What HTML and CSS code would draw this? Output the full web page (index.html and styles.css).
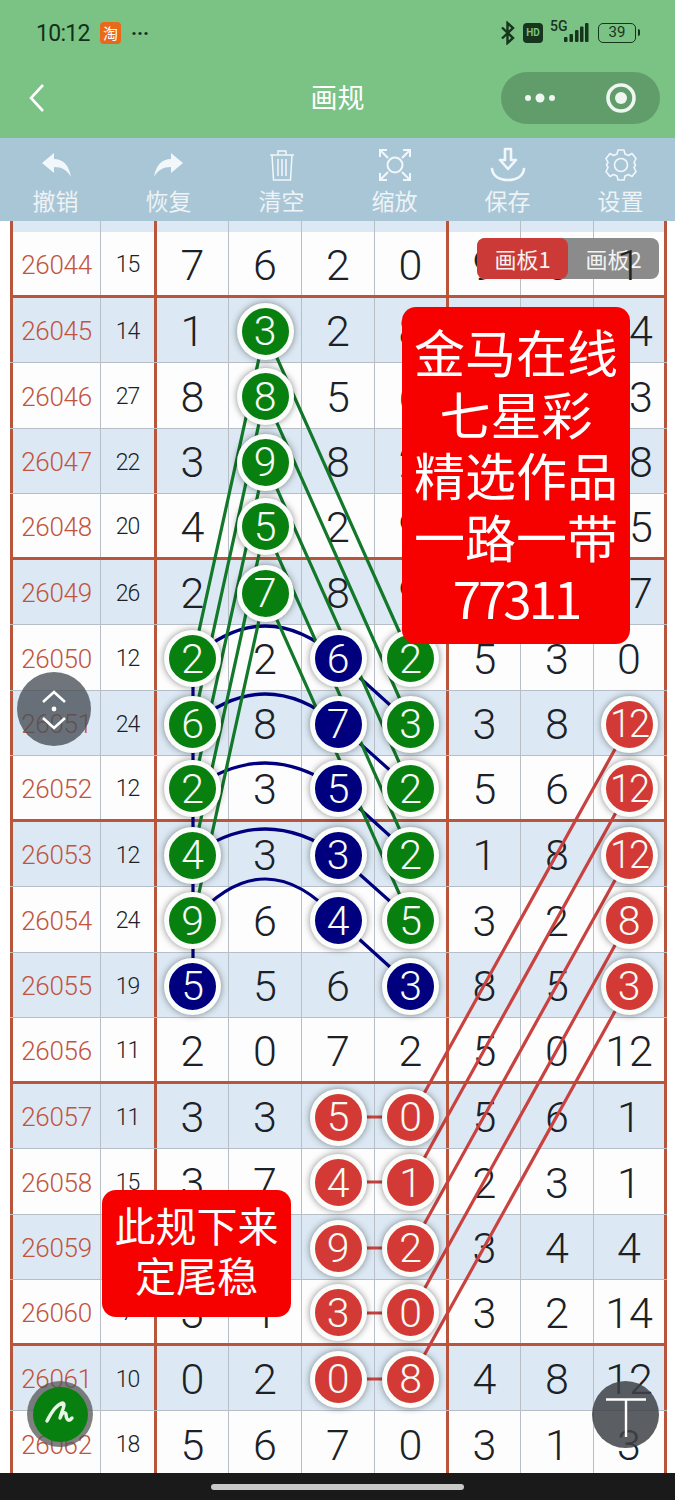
FILE: index.html
```html
<!DOCTYPE html>
<html lang="zh">
<head>
<meta charset="utf-8">
<title>画规</title>
<link rel="stylesheet" href="styles.css">
</head>
<body>
<div class="app">
  <header class="head">
    <div class="status">
      <div class="status-left">
        <span class="time">10:12</span>
        <span class="tb">淘</span>
        <span class="more">···</span>
      </div>
      <div class="status-right">
        <svg class="bt" width="15" height="24" viewBox="0 0 15 24"><path d="M2 6.500 13 17l-5.500 5V2L13 7 2 17.500" fill="none" stroke="#17341d" stroke-width="2.400"/></svg>
        <span class="hd">HD</span>
        <span class="net">5G</span>
        <svg class="sig" width="25" height="20" viewBox="0 0 25 20"><g fill="#17341d"><rect x="0" y="14" width="3.500" height="5" rx="1"/><rect x="5.500" y="11" width="3.500" height="8" rx="1"/><rect x="11" y="7" width="3.500" height="12" rx="1"/><rect x="16" y="3.500" width="3.500" height="15.500" rx="1"/><rect x="21" y="0" width="3.500" height="19" rx="1"/></g></svg>
        <span class="batt"><span class="batt-num">39</span></span>
      </div>
    </div>
    <nav class="nav">
      <svg class="back" width="18" height="30" viewBox="0 0 18 30"><path d="M15 2 3 15l12 13" fill="none" stroke="#fff" stroke-width="2.600"/></svg>
      <h1 class="title">画规</h1>
      <div class="capsule">
        <svg width="34" height="12" viewBox="0 0 34 12"><g fill="#eef6ef"><circle cx="5" cy="6" r="3"/><circle cx="17" cy="6" r="4.500"/><circle cx="29" cy="6" r="3"/></g></svg>
        <svg width="32" height="32" viewBox="0 0 32 32"><circle cx="16" cy="16" r="13" fill="none" stroke="#eef6ef" stroke-width="3.600"/><circle cx="16" cy="16" r="6" fill="#eef6ef"/></svg>
      </div>
    </nav>
  </header>

  <div class="toolbar">
    <div class="tool">
      <svg width="34" height="34" viewBox="0 0 34 34"><path d="M3 15 15 5v6c9 0 15 6 17 18-4-7-9-10-17-10v6z" fill="#f1f7fa"/></svg>
      <span>撤销</span>
    </div>
    <div class="tool">
      <svg width="34" height="34" viewBox="0 0 34 34"><path d="M31 15 19 5v6c-9 0-15 6-17 18 4-7 9-10 17-10v6z" fill="#f1f7fa"/></svg>
      <span>恢复</span>
    </div>
    <div class="tool">
      <svg width="34" height="34" viewBox="0 0 34 34"><g fill="none" stroke="#f1f7fa" stroke-width="1.500"><path d="M5 7h24M13 7V3h8v4M7 7l1.500 25h17L27 7M13 11v17M17 11v17M21 11v17"/></g></svg>
      <span>清空</span>
    </div>
    <div class="tool">
      <svg width="34" height="34" viewBox="0 0 34 34"><g fill="none" stroke="#f1f7fa" stroke-width="2"><circle cx="17" cy="17" r="7.500"/><path d="M2 9V2h7M2 2l8 8M32 9V2h-7M32 2l-8 8M2 25v7h7M2 32l8-8M32 25v7h-7M32 32l-8-8"/></g></svg>
      <span>缩放</span>
    </div>
    <div class="tool">
      <svg width="36" height="36" viewBox="0 0 36 36"><g fill="none" stroke="#f1f7fa" stroke-width="2.600" stroke-linejoin="round" stroke-linecap="round"><path d="M15 2h6v11h5l-8 9-8-9h5z"/><path d="M2 22c1 7 7 11 16 11s15-4 16-11"/></g></svg>
      <span>保存</span>
    </div>
    <div class="tool">
      <svg width="34" height="34" viewBox="0 0 34 34"><g fill="none" stroke="#f1f7fa" stroke-width="1.600" stroke-linejoin="round"><circle cx="17" cy="17" r="6.500"/><path d="M14 2h6l1 4 3.500 1.500 3.500-2 4 5-2 4 1.500 2.500-1.500 2.500 2 4-4 5-3.500-2L21 28l-1 4h-6l-1-4-3.500-1.500-3.500 2-4-5 2-4L2.500 17 4 14.500l-2-4 4-5 3.500 2L13 6z"/></g></svg>
      <span>设置</span>
    </div>
  </div>

  <main class="board">
    <div class="row alt sliver"><i class="c lab"></i><i class="c sum"></i><i class="c"></i><i class="c"></i><i class="c"></i><i class="c bar"></i><i class="c"></i><i class="c"></i><i class="c end"></i></div>

    <div class="row sep"><span class="c lab">26044</span><span class="c sum">15</span><span class="c">7</span><span class="c">6</span><span class="c">2</span><span class="c bar">0</span><span class="c">9</span><span class="c">5</span><span class="c end"><b class="over">1</b></span></div>
    <div class="row alt"><span class="c lab">26045</span><span class="c sum">14</span><span class="c">1</span><span class="c"><b class="ball g">3</b></span><span class="c">2</span><span class="c bar">8</span><span class="c">2</span><span class="c">6</span><span class="c end">14</span></div>
    <div class="row"><span class="c lab">26046</span><span class="c sum">27</span><span class="c">8</span><span class="c"><b class="ball g">8</b></span><span class="c">5</span><span class="c bar">6</span><span class="c">1</span><span class="c">3</span><span class="c end">13</span></div>
    <div class="row alt"><span class="c lab">26047</span><span class="c sum">22</span><span class="c">3</span><span class="c"><b class="ball g">9</b></span><span class="c">8</span><span class="c bar">2</span><span class="c">4</span><span class="c">7</span><span class="c end">18</span></div>
    <div class="row sep"><span class="c lab">26048</span><span class="c sum">20</span><span class="c">4</span><span class="c"><b class="ball g">5</b></span><span class="c">2</span><span class="c bar">9</span><span class="c">0</span><span class="c">2</span><span class="c end">15</span></div>
    <div class="row alt"><span class="c lab">26049</span><span class="c sum">26</span><span class="c">2</span><span class="c"><b class="ball g">7</b></span><span class="c">8</span><span class="c bar">9</span><span class="c">6</span><span class="c">1</span><span class="c end">17</span></div>
    <div class="row"><span class="c lab">26050</span><span class="c sum">12</span><span class="c"><b class="ball g">2</b></span><span class="c">2</span><span class="c"><b class="ball n">6</b></span><span class="c bar"><b class="ball g">2</b></span><span class="c">5</span><span class="c">3</span><span class="c end">0</span></div>
    <div class="row alt"><span class="c lab">26051</span><span class="c sum">24</span><span class="c"><b class="ball g">6</b></span><span class="c">8</span><span class="c"><b class="ball n">7</b></span><span class="c bar"><b class="ball g">3</b></span><span class="c">3</span><span class="c">8</span><span class="c end"><b class="ball r two">12</b></span></div>
    <div class="row sep"><span class="c lab">26052</span><span class="c sum">12</span><span class="c"><b class="ball g">2</b></span><span class="c">3</span><span class="c"><b class="ball n">5</b></span><span class="c bar"><b class="ball g">2</b></span><span class="c">5</span><span class="c">6</span><span class="c end"><b class="ball r two">12</b></span></div>
    <div class="row alt"><span class="c lab">26053</span><span class="c sum">12</span><span class="c"><b class="ball g">4</b></span><span class="c">3</span><span class="c"><b class="ball n">3</b></span><span class="c bar"><b class="ball g">2</b></span><span class="c">1</span><span class="c">8</span><span class="c end"><b class="ball r two">12</b></span></div>
    <div class="row"><span class="c lab">26054</span><span class="c sum">24</span><span class="c"><b class="ball g">9</b></span><span class="c">6</span><span class="c"><b class="ball n">4</b></span><span class="c bar"><b class="ball g">5</b></span><span class="c">3</span><span class="c">2</span><span class="c end"><b class="ball r">8</b></span></div>
    <div class="row alt"><span class="c lab">26055</span><span class="c sum">19</span><span class="c"><b class="ball n">5</b></span><span class="c">5</span><span class="c">6</span><span class="c bar"><b class="ball n">3</b></span><span class="c">8</span><span class="c">5</span><span class="c end"><b class="ball r">3</b></span></div>
    <div class="row sep"><span class="c lab">26056</span><span class="c sum">11</span><span class="c">2</span><span class="c">0</span><span class="c">7</span><span class="c bar">2</span><span class="c">5</span><span class="c">0</span><span class="c end">12</span></div>
    <div class="row alt"><span class="c lab">26057</span><span class="c sum">11</span><span class="c">3</span><span class="c">3</span><span class="c"><b class="ball r">5</b></span><span class="c bar"><b class="ball r">0</b></span><span class="c">5</span><span class="c">6</span><span class="c end">1</span></div>
    <div class="row"><span class="c lab">26058</span><span class="c sum">15</span><span class="c">3</span><span class="c">7</span><span class="c"><b class="ball r">4</b></span><span class="c bar"><b class="ball r">1</b></span><span class="c">2</span><span class="c">3</span><span class="c end">1</span></div>
    <div class="row alt"><span class="c lab">26059</span><span class="c sum">20</span><span class="c">8</span><span class="c">5</span><span class="c"><b class="ball r">9</b></span><span class="c bar"><b class="ball r">2</b></span><span class="c">3</span><span class="c">4</span><span class="c end">4</span></div>
    <div class="row sep"><span class="c lab">26060</span><span class="c sum">7</span><span class="c">3</span><span class="c">1</span><span class="c"><b class="ball r">3</b></span><span class="c bar"><b class="ball r">0</b></span><span class="c">3</span><span class="c">2</span><span class="c end">14</span></div>
    <div class="row alt"><span class="c lab">26061</span><span class="c sum">10</span><span class="c">0</span><span class="c">2</span><span class="c"><b class="ball r">0</b></span><span class="c bar"><b class="ball r">8</b></span><span class="c">4</span><span class="c">8</span><span class="c end">12</span></div>
    <div class="row"><span class="c lab">26062</span><span class="c sum">18</span><span class="c">5</span><span class="c">6</span><span class="c">7</span><span class="c bar">0</span><span class="c">3</span><span class="c">1</span><span class="c end">3</span></div>

    <svg class="lines" width="675" height="1252" viewBox="0 221 675 1252">
      <g class="navy">
        <path d="M193 658V986"/>
        <path d="M193 658Q265 594 338 658L411 724"/>
        <path d="M193 724Q265 664 338 724L411 789"/>
        <path d="M193 789Q265 737 338 789L411 855"/>
        <path d="M193 855Q265 803 338 855L411 920"/>
        <path d="M193 920Q265 838 338 920L411 986"/>
      </g>
      <g class="green">
        <path d="M193 658 265 331 411 658"/>
        <path d="M193 724 265 396 411 724"/>
        <path d="M193 789 265 462 411 789"/>
        <path d="M193 855 265 527 411 855"/>
        <path d="M193 920 265 593 411 920"/>
      </g>
      <g class="redl">
        <path d="M338 1117H411L629 724"/>
        <path d="M338 1182H411L629 789"/>
        <path d="M338 1248H411L629 855"/>
        <path d="M338 1313H411L629 920"/>
        <path d="M338 1379H411L629 986"/>
      </g>
    </svg>

    <div class="tabs"><span class="tab on">画板1</span><span class="tab">画板2</span></div>

    <div class="note note-a">金马在线<br>七星彩<br>精选作品<br>一路一带<br><span class="num">77311</span></div>
    <div class="note note-b">此规下来<br>定尾稳</div>

    <div class="fab fab-scroll">
      <svg width="40" height="52" viewBox="0 0 40 52"><g fill="none" stroke="#fff" stroke-width="2.600"><path d="M9 19 20 9l11 10M9 35l11 10 11-10"/></g><circle cx="20" cy="26" r="2.400" fill="#fff"/></svg>
    </div>
    <div class="fab fab-pen">
      <span class="pen-in">
        <svg width="40" height="40" viewBox="0 0 40 40"><path d="M7 27C11 19 17 10 23 9c3 1-2 10-3 15 2-5 4-7 6-4 0 3 1 7 4 6l2-2" fill="none" stroke="#e9f5e6" stroke-width="3.400" stroke-linecap="round" stroke-linejoin="round"/></svg>
      </span>
    </div>
    <div class="fab fab-top">
      <svg width="44" height="44" viewBox="0 0 44 44"><path d="M2 6.500h40M22 6.500V44" fill="none" stroke="#fff" stroke-width="2.400"/></svg>
    </div>
  </main>

  <footer class="gesture"><span class="pill"></span></footer>
</div>
</body>
</html>
```
FILE: styles.css
```css
* { box-sizing: border-box; }
html, body { margin: 0; padding: 0; }
body {
  width: 675px;
  height: 1500px;
  overflow: hidden;
  background: #fff;
  font-family: Roboto, "Noto Sans CJK SC", sans-serif;
  color: #1b2127;
}
.app { display: flex; flex-direction: column; height: 1500px; }

/* header */
.head { height: 138px; background: #7bc285; flex: none; }
.status {
  height: 66px;
  padding: 21px 39px 0 36px;
  display: flex;
  justify-content: space-between;
  align-items: flex-start;
}
.status-left { display: flex; align-items: center; height: 24px; }
.time { font-size: 23px; letter-spacing: -.7px; color: #14301b; width: 64px; }
.tb {
  width: 21px; height: 22px; border-radius: 4px;
  background: #e8691a; color: #fff;
  font: 15px/22px "Noto Sans CJK SC", sans-serif;
  text-align: center;
}
.more { margin-left: 10px; font: bold 20px/20px Roboto, sans-serif; color: #14301b; }
.status-right { display: flex; align-items: center; height: 24px; position: relative; }
.bt { margin-right: 8px; margin-left: -8px; }
.hd {
  width: 20px; height: 20px; border-radius: 4px;
  background: #17341d; color: #7bc285;
  font: bold 10px/20px Roboto, sans-serif; text-align: center;
  margin-right: 7px;
}
.net { font: 500 14px/14px Roboto, sans-serif; color: #17341d; align-self: flex-start; width: 14px; margin-top: -2px; }
.sig { margin-right: 9px; }
.batt {
  width: 38px; height: 20px; border: 1.500px solid #17341d; border-radius: 5px;
  position: relative; display: block; text-align: center;
}
.batt::after {
  content: ""; position: absolute; right: -5px; top: 5px;
  width: 2.500px; height: 7px; background: #17341d; border-radius: 0 2px 2px 0;
}
.batt-num { font-size: 15px; line-height: 17px; color: #17341d; display: block; }

.nav {
  height: 72px;
  display: grid;
  grid-template-columns: 1fr auto 1fr;
  align-items: start;
  padding: 6px 15px 0;
}
.back { margin: 11px 0 0 13px; }
.title {
  margin: 7px 0 0;
  font: 400 27px/36px "Noto Sans CJK SC", sans-serif;
  color: #fff;
  text-align: center;
}
.capsule {
  justify-self: end;
  width: 159px; height: 52px; border-radius: 26px;
  background: #619d6b;
  display: flex; align-items: center;
  justify-content: space-between;
  padding: 0 23px 0 22px;
}

/* toolbar */
.toolbar {
  height: 83px; flex: none;
  background: #a9c6d6;
  display: grid;
  grid-template-columns: repeat(6, 113px);
  padding: 9px 0 0;
}
.tool { display: flex; flex-direction: column; align-items: center; transform: translateX(-1px); }
.tool svg { height: 36px; }
.tool span {
  margin-top: 2px;
  font: 400 23px/30px "Noto Sans CJK SC", sans-serif;
  color: #edf3f6;
}

/* board */
.board {
  position: relative;
  height: 1252px;
  flex: none;
  overflow: hidden;
  background: #fff;
}
.row {
  display: grid;
  grid-template-columns: 91px 56px 72px 73px 73px 74px 72px 73px 73px;
  margin-left: 10px;
  width: 657px;
  height: 65.500px;
  background: #fdfdfd;
  border-bottom: 1.500px solid #b7bec5;
}
.row.alt { background: #dce9f4; }
.row.sep { border-bottom: 3px solid #b8553a; }
.row.sliver { height: 11px; border-bottom: 0; }
.c {
  display: flex; align-items: center; justify-content: center;
  padding-top: 3px;
  border-right: 1.500px solid #b7bec5;
  font-size: 43px;
  font-style: normal;
  font-weight: 300;
}
.lab {
  border-left: 3px solid #b8553a;
  font-size: 26px;
  letter-spacing: -.3px;
  color: #c2543f;
}
.sum {
  border-right: 3px solid #b8553a;
  font-size: 23px;
  letter-spacing: -1px;
}
.bar { border-right: 3px solid #b8553a; }
.end { border-right: 3px solid #b8553a; }
.over { position: relative; z-index: 4; font-weight: 300; }

.ball {
  position: relative;
  z-index: 2;
  width: 57px; height: 57px; flex: none;
  border-radius: 50%;
  border: 5px solid #fbfdfb;
  box-shadow: 0 0 7px rgba(0, 0, 0, .45);
  display: flex; align-items: center; justify-content: center;
  color: #f6fbf6;
  font-size: 41px;
  font-weight: 300;
}
.ball.g { background: #07800f; }
.ball.n { background: #00007f; }
.ball.r { background: #d33a35; }
.ball.two { font-size: 38px; letter-spacing: -2px; }

.lines { position: absolute; left: 0; top: 0; z-index: 1; pointer-events: none; }
.lines path { fill: none; stroke-width: 3.200; }
.navy path { stroke: #00007f; }
.green path { stroke: #12782a; }
.redl path { stroke: #c9423f; }

.tabs {
  position: absolute; z-index: 3;
  left: 477px; top: 17px;
  width: 182px; height: 41px;
  display: flex;
  background: #8b8b8b;
  border-radius: 8px;
}
.tab {
  flex: 1;
  border-radius: 8px;
  color: #f3f3f3;
  font: 22px/41px "Noto Sans CJK SC", Roboto, sans-serif;
  text-align: center;
}
.tab.on { background: #cc3a38; }

.note {
  position: absolute; z-index: 5;
  background: #f60000;
  color: #fff;
  border-radius: 14px;
  text-align: center;
  font-family: "Noto Sans CJK SC", sans-serif;
}
.note-a {
  left: 402px; top: 86px;
  width: 228px; height: 337px;
  padding-top: 14px;
  font-size: 51px;
  line-height: 61.500px;
}
.num { letter-spacing: -3px; }
.note-b {
  left: 102px; top: 969px;
  width: 189px; height: 127px;
  padding-top: 9px;
  font-size: 41px;
  line-height: 50px;
}

.fab {
  position: absolute; z-index: 6;
  border-radius: 50%;
  display: flex; align-items: center; justify-content: center;
}
.fab-scroll { left: 17px; top: 451px; width: 74px; height: 74px; background: rgba(70, 78, 84, .78); }
.fab-pen { left: 27px; top: 1160px; width: 66px; height: 66px; background: rgba(85, 85, 85, .75); }
.pen-in {
  width: 55px; height: 55px; border-radius: 50%;
  background: #07800f;
  display: flex; align-items: center; justify-content: center;
}
.fab-top { left: 592px; top: 1160px; width: 67px; height: 67px; background: rgba(62, 66, 70, .85); }

/* gesture bar */
.gesture {
  flex: 1;
  background: #1a1a1a;
  display: flex; align-items: center; justify-content: center;
}
.pill { width: 253px; height: 6px; border-radius: 3px; background: #c8c8c8; }
```
